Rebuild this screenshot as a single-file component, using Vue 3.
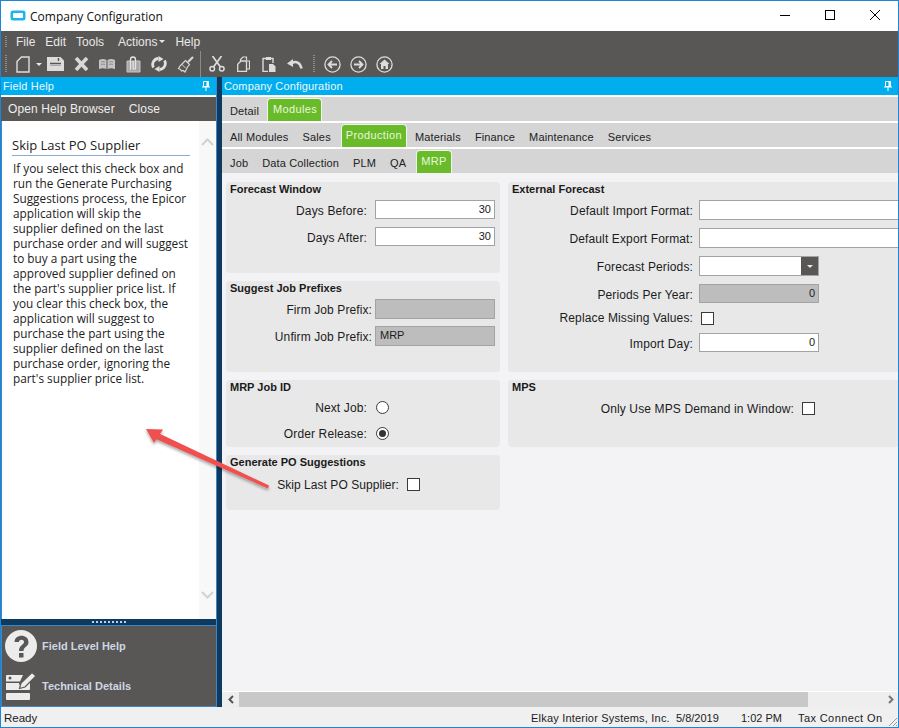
<script setup>
const helpLines = [
  'If you select this check box and',
  'run the Generate Purchasing',
  'Suggestions process, the Epicor',
  'application will skip the',
  'supplier defined on the last',
  'purchase order and will suggest',
  'to buy a part using the',
  'approved supplier defined on',
  "the part's supplier price list. If",
  'you clear this check box, the',
  'application will suggest to',
  'purchase the part using the',
  'supplier defined on the last',
  'purchase order, ignoring the',
  "part's supplier price list."
]
const moduleTabs = ['All Modules', 'Sales', 'Production', 'Materials', 'Finance', 'Maintenance', 'Services']
const subTabs = ['Job', 'Data Collection', 'PLM', 'QA', 'MRP']
</script>

<template>
  <div class="window">
    <!-- title bar -->
    <div class="titlebar">
      <svg class="app-icon" width="16" height="12" viewBox="0 0 16 12">
        <rect x="0.5" y="0.5" width="15" height="10" rx="2.5" fill="#1fb5ea" />
        <rect x="3" y="3" width="10" height="5" rx="1" fill="#fff" />
      </svg>
      <span class="title">Company Configuration</span>
      <div class="win-buttons">
        <svg width="12" height="12" viewBox="0 0 12 12"><path d="M1 6.5h10" stroke="#000" fill="none" /></svg>
        <svg width="12" height="12" viewBox="0 0 12 12"><rect x="1.5" y="1.5" width="9" height="9" stroke="#000" fill="none" /></svg>
        <svg width="12" height="12" viewBox="0 0 12 12"><path d="M1 1l10 10M11 1L1 11" stroke="#000" fill="none" /></svg>
      </div>
    </div>

    <!-- menu + toolbar -->
    <div class="menubar">
      <i class="grip"></i>
      <span>File</span><span>Edit</span><span class="tools">Tools</span>
      <span>Actions<b class="caret"></b></span>
      <span>Help</span>
    </div>
    <div class="toolbar">
      <i class="grip tall"></i>
      <svg class="ic new" width="14" height="17" viewBox="0 0 14 17"><path d="M5.500 1H13v15H1V5.500z" fill="none" stroke="#dedede" stroke-width="1.400" /></svg>
      <b class="caret tb"></b>
      <svg class="ic save" width="17" height="16" viewBox="0 0 17 16"><path d="M0 1h13.500L17 4.500V15H0z" fill="#dcdcdc" /><path d="M3 7.500h11M11.500 2v3" stroke="#595755" stroke-width="1.500" fill="none" /><path d="M3 9.500h11" stroke="#aaa" /></svg>
      <svg class="ic x" width="15" height="14" viewBox="0 0 15 14"><path d="M2 1l11 12M13 1L2 13" stroke="#d8d8d8" stroke-width="3.600" fill="none" /></svg>
      <svg class="ic book" width="16" height="12" viewBox="0 0 16 12"><path d="M0 2c3-1.500 5-1.500 7.500 0v9C5 10 3 10 0 11zM16 2c-3-1.500-5-1.500-7.500 0v9c2.500-1 4.500-1 7.500 0z" fill="#c4c4c4" /><path d="M2 4c1.500-.5 2.500-.5 4 0M2 6.500c1.500-.5 2.500-.5 4 0M10 4c1.500-.5 2.500-.5 4 0M10 6.500c1.500-.5 2.500-.5 4 0" stroke="#8e8e8e" fill="none" /></svg>
      <svg class="ic clip" width="15" height="17" viewBox="0 0 15 17"><path d="M1 5h13v11H1z" fill="#a8a8a8" stroke="#c8c8c8" /><path d="M4.500 14V3.500a2.500 2.500 0 0 1 5 0V12a1.200 1.200 0 0 1-2.400 0V5" fill="none" stroke="#e4e4e4" stroke-width="1.300" /></svg>
      <svg class="ic sync" width="16" height="16" viewBox="0 0 16 16"><path d="M2.500 11.500A6 6 0 0 1 7.500 2.500" fill="none" stroke="#e0e0e0" stroke-width="2.800" /><path d="M13.500 4.500A6 6 0 0 1 8.500 13.500" fill="none" stroke="#e0e0e0" stroke-width="2.800" /><path d="M7.500 0l5 3-5 3zM8.500 16l-5-3 5-3z" fill="#e0e0e0" /></svg>
      <svg class="ic broom" width="17" height="17" viewBox="0 0 17 17"><path d="M16 1l-5 5" stroke="#d8d8d8" stroke-width="2.200" /><path d="M8.500 4.500l4 4-2 2.500-2.500 5-2-1.500-1.500.5-1-1.500-2-1 1.500-2.500 3-3z" fill="none" stroke="#d8d8d8" stroke-width="1.200" /><path d="M4.500 8l4 4" stroke="#d8d8d8" /></svg>
      <i class="sep"></i>
      <svg class="ic cut" width="16" height="16" viewBox="0 0 16 16"><circle cx="3.200" cy="12.800" r="2.300" fill="none" stroke="#dcdcdc" stroke-width="1.500" /><circle cx="12.800" cy="12.800" r="2.300" fill="none" stroke="#dcdcdc" stroke-width="1.500" /><path d="M4.500 11L12.500 0M11.500 11L3.500 0" stroke="#dcdcdc" stroke-width="1.700" /></svg>
      <svg class="ic copy" width="13" height="16" viewBox="0 0 13 16"><path d="M3.500 5V3.500L6 1h3.500v3M9.500 5h3v8h-3" fill="none" stroke="#dcdcdc" stroke-width="1.200" /><path d="M4 5h5.500v10.500H.7V8.300z" fill="none" stroke="#dcdcdc" stroke-width="1.300" /></svg>
      <svg class="ic paste" width="14" height="16" viewBox="0 0 14 16"><path d="M4 2.500H1v13h5M9 2.500h2V7" fill="none" stroke="#dcdcdc" stroke-width="1.400" /><path d="M4 1h5v3H4z" fill="#dcdcdc" /><path d="M7 8h4l2.500 2.500V16H7z" fill="#dcdcdc" /></svg>
      <svg class="ic undo" width="16" height="11" viewBox="0 0 16 11"><path d="M5 4c4-2 8-1 9.500 5.500" fill="none" stroke="#dcdcdc" stroke-width="2.600" /><path d="M0 4.500L6 0v8z" fill="#dcdcdc" /></svg>
      <i class="grip tall g2"></i>
      <svg class="ic nav" width="17" height="17" viewBox="0 0 17 17"><circle cx="8.500" cy="8.500" r="7.600" fill="none" stroke="#dcdcdc" stroke-width="1.300" /><path d="M13 8.500H5M8 5L4.500 8.500 8 12" fill="none" stroke="#dcdcdc" stroke-width="1.800" /></svg>
      <svg class="ic nav" width="17" height="17" viewBox="0 0 17 17"><circle cx="8.500" cy="8.500" r="7.600" fill="none" stroke="#dcdcdc" stroke-width="1.300" /><path d="M4 8.500h8M9 5l3.500 3.500L9 12" fill="none" stroke="#dcdcdc" stroke-width="1.800" /></svg>
      <svg class="ic nav" width="17" height="17" viewBox="0 0 17 17"><circle cx="8.500" cy="8.500" r="7.600" fill="none" stroke="#dcdcdc" stroke-width="1.300" /><path d="M8.500 3.500L3.500 8H5v5h2.500v-3h2v3H12V8h1.500z" fill="#dcdcdc" /></svg>
    </div>

    <div class="body">
      <!-- field help panel -->
      <div class="help-panel">
        <div class="panel-head">
          <span>Field Help</span>
          <svg class="pin" width="8" height="10" viewBox="0 0 8 10"><path d="M1.500 0.500h5v5h-5zM0 6h8M4 6v4" fill="none" stroke="#fff" /><path d="M4.500 1h2v4h-2z" fill="#fff" /></svg>
        </div>
        <div class="help-actions"><span>Open Help Browser</span><span>Close</span></div>
        <div class="help-content">
          <div class="help-text">
            <h3>Skip Last PO Supplier</h3>
            <p><template v-for="line in helpLines" :key="line">{{ line }}<br /></template></p>
          </div>
          <div class="help-scroll">
            <svg width="13" height="8" viewBox="0 0 13 8"><path d="M1 7l5.500-5.500L12 7" fill="none" stroke="#d2d2d2" stroke-width="2" /></svg>
            <svg width="13" height="8" viewBox="0 0 13 8"><path d="M1 1l5.500 5.500L12 1" fill="none" stroke="#d2d2d2" stroke-width="2" /></svg>
          </div>
        </div>
        <div class="splitter"><i v-for="n in 9" :key="n"></i></div>
        <div class="help-links">
          <div class="help-link">
            <svg width="32" height="32" viewBox="0 0 32 32">
              <circle cx="16" cy="16" r="16" fill="#ececec" />
              <path d="M9.500 12c0-8.500 14-8.500 14 0 0 5-5 4.500-5 9h-4.500c0-6 5-6 5-9 0-3-5-3-5 0z" fill="#595755" />
              <rect x="14" y="23" width="4.500" height="4.500" fill="#595755" />
            </svg>
            <span>Field Level Help</span>
          </div>
          <div class="help-link">
            <svg width="32" height="29" viewBox="0 0 32 29">
              <path d="M2 4h16l-3 6.500H1V5a1 1 0 0 1 1-1z" fill="#ececec" />
              <path d="M1 12h12l-1 7h12a1 1 0 0 0 1-1v-6h-5l-2 2" fill="#ececec" />
              <path d="M1 12h13v7H1z" fill="#ececec" />
              <rect x="1" y="22" width="24" height="7" rx="1" fill="#ececec" />
              <circle cx="5" cy="7" r="1.500" fill="#595755" />
              <path d="M27 1.500l4 3.500-11 11-5.500 1.500 1.500-5.500z" fill="#ececec" stroke="#595755" stroke-width="1.200" />
            </svg>
            <span>Technical Details</span>
          </div>
        </div>
      </div>

      <!-- main panel -->
      <div class="main-panel">
        <div class="panel-head">
          <span>Company Configuration</span>
          <svg class="pin" width="8" height="10" viewBox="0 0 8 10"><path d="M1.500 0.500h5v5h-5zM0 6h8M4 6v4" fill="none" stroke="#fff" /><path d="M4.500 1h2v4h-2z" fill="#fff" /></svg>
        </div>
        <div class="tabs first">
          <span class="tab">Detail</span>
          <span class="tab active">Modules</span>
        </div>
        <div class="tabs">
          <span v-for="t in moduleTabs" :key="t" class="tab" :class="{ active: t === 'Production' }">{{ t }}</span>
        </div>
        <div class="tabs">
          <span v-for="t in subTabs" :key="t" class="tab" :class="{ active: t === 'MRP' }">{{ t }}</span>
        </div>

        <div class="content">
          <div class="col left-col">
            <section class="group g-forecast">
              <h4>Forecast Window</h4>
              <div class="row"><label>Days Before:</label><div class="input num">30</div></div>
              <div class="row"><label>Days After:</label><div class="input num">30</div></div>
            </section>
            <section class="group g-prefix">
              <h4>Suggest Job Prefixes</h4>
              <div class="row prefix"><label>Firm Job Prefix:</label><div class="input off tall"></div></div>
              <div class="row prefix"><label>Unfirm Job Prefix:</label><div class="input off tall">MRP</div></div>
            </section>
            <section class="group g-jobid">
              <h4>MRP Job ID</h4>
              <div class="row tight"><label>Next Job:</label><i class="radio"></i></div>
              <div class="row tight"><label>Order Release:</label><i class="radio on"></i></div>
            </section>
            <section class="group g-po">
              <h4>Generate PO Suggestions</h4>
              <div class="row po"><label>Skip Last PO Supplier:</label><i class="check"></i></div>
            </section>
          </div>

          <div class="col right-col">
            <section class="group g-external">
              <h4>External Forecast</h4>
              <div class="row"><label>Default Import Format:</label><div class="input wide"></div></div>
              <div class="row"><label>Default Export Format:</label><div class="input wide"></div></div>
              <div class="row">
                <label>Forecast Periods:</label>
                <div class="input combo"><b class="combo-btn"><i class="caret"></i></b></div>
              </div>
              <div class="row"><label>Periods Per Year:</label><div class="input off num">0</div></div>
              <div class="row check-row"><label>Replace Missing Values:</label><i class="check"></i></div>
              <div class="row"><label>Import Day:</label><div class="input num">0</div></div>
            </section>
            <section class="group g-mps">
              <h4>MPS</h4>
              <div class="row mps"><label>Only Use MPS Demand in Window:</label><i class="check"></i></div>
            </section>
          </div>
        </div>

        <div class="hscroll">
          <svg width="6" height="9" viewBox="0 0 6 9"><path d="M5 1L1.500 4.500 5 8" fill="none" stroke="#555" stroke-width="2" /></svg>
          <div class="thumb"></div>
          <svg class="right-arrow" width="6" height="9" viewBox="0 0 6 9"><path d="M1 1l3.500 3.500L1 8" fill="none" stroke="#777" stroke-width="2" /></svg>
        </div>
      </div>
    </div>

    <!-- status bar -->
    <div class="statusbar">
      <span class="ready">Ready</span>
      <span class="s-company">Elkay Interior Systems, Inc.</span>
      <span class="s-date">5/8/2019</span>
      <span class="s-time">1:02 PM</span>
      <span class="s-tax">Tax Connect On</span>
      <svg class="resize" width="11" height="11" viewBox="0 0 11 11"><path d="M10 2L2 10M10 6L6 10M10 9L9 10" stroke="#999" fill="none" /></svg>
    </div>

    <!-- annotation arrow lying over the screenshot -->
    <svg class="annotation" width="899" height="728" viewBox="0 0 899 728">
      <defs>
        <filter id="arrow-shadow" x="-10%" y="-10%" width="120%" height="130%">
          <feDropShadow dx="0" dy="2" stdDeviation="1.500" flood-color="#000" flood-opacity="0.35" />
        </filter>
      </defs>
      <g filter="url(#arrow-shadow)" fill="#f0504f">
        <path d="M269 485.500L156 432L153.500 438L268 488.500z" />
        <path d="M146 429L163 429.500L154 443z" />
      </g>
    </svg>
  </div>
</template>

<style>
html, body {
  margin: 0;
  background: #fff;
}
</style>

<style scoped>
.window {
  position: relative;
  width: 899px;
  height: 728px;
  box-sizing: border-box;
  border: 1px solid #1a86d8;
  display: flex;
  flex-direction: column;
  overflow: hidden;
  font-family: 'Liberation Sans', Arial, sans-serif;
  font-size: 12px;
  color: #1c1c1c;
  background: #fff;
}

.titlebar {
  height: 30px;
  flex: none;
  display: flex;
  align-items: center;
  padding-left: 9px;
  background: #fff;
}
.app-icon { margin-right: 4px; }
.title {
  font-family: 'Open Sans', sans-serif;
  font-size: 12px;
  color: #111;
}
.win-buttons {
  margin-left: auto;
  margin-right: 17px;
  margin-bottom: 2px;
  display: flex;
  gap: 33px;
}

.menubar {
  height: 22px;
  flex: none;
  display: flex;
  align-items: center;
  background: #595755;
  color: #e8e8e8;
  font-size: 12px;
  padding-left: 4px;
  padding-bottom: 1px;
  box-sizing: border-box;
}
.menubar span { margin-right: 10px; display: inline-flex; align-items: center; }
.menubar .grip { margin-right: 9px; }
.menubar .tools { margin-right: 14px; }

.grip {
  display: inline-block;
  width: 2px;
  height: 12px;
  background: repeating-linear-gradient(#8d8b89 0 1px, transparent 1px 2px);
}
.grip.tall { height: 18px; margin-right: 9px; }
.caret {
  display: inline-block;
  width: 0;
  height: 0;
  border-left: 3px solid transparent;
  border-right: 3px solid transparent;
  border-top: 3px solid #e8e8e8;
  margin-left: 2px;
}

.toolbar {
  height: 24px;
  flex: none;
  display: flex;
  align-items: center;
  background: #595755;
  padding-left: 4px;
  padding-bottom: 2px;
  box-sizing: border-box;
}
.ic { flex: none; }
.caret.tb { margin-left: 6px; margin-right: 5px; }
.save { margin-right: 10px; }
.x { margin-right: 10px; }
.book { margin-right: 11px; }
.clip { margin-right: 10px; }
.sync { margin-right: 10px; }
.sep {
  width: 1px;
  height: 26px;
  background: #8d8b89;
  margin: 0 8px 0 6px;
}
.cut { margin-right: 12px; }
.copy { margin-right: 12px; }
.paste { margin-right: 11px; }
.undo { margin-right: 10px; }
.grip.g2 { margin-right: 9px; }
.nav { margin-right: 9px; }

.body {
  flex: 1;
  min-height: 0;
  display: flex;
  background: #0e3a5f;
}

.panel-head {
  height: 18px;
  flex: none;
  background: #00aeef;
  color: #ecf8fe;
  display: flex;
  align-items: center;
  justify-content: space-between;
  padding: 0 3px 0 2px;
  font-size: 11px;
  letter-spacing: 0.15px;
}
.pin { margin-right: 3px; }

.help-panel {
  width: 216px;
  flex: none;
  display: flex;
  flex-direction: column;
  border-right: 1px solid #3f86c9;
  box-sizing: border-box;
  margin-right: 5px;
  background: #fff;
}
.help-actions {
  height: 24px;
  flex: none;
  margin-top: 2px;
  background: #595755;
  color: #eee;
  display: flex;
  align-items: center;
  gap: 14px;
  padding-left: 7px;
  font-size: 12px;
  letter-spacing: 0.12px;
}
.help-content {
  flex: 1;
  min-height: 0;
  display: flex;
  background: #fff;
  border-left: 1px solid #3f86c9;
}
.help-text {
  width: 197px;
  box-sizing: border-box;
  padding: 16px 0 0 11px;
  font-family: 'Open Sans', sans-serif;
  color: #222;
}
.help-text h3 {
  margin: 0 9px 0 -1px;
  font-size: 13px;
  font-weight: 400;
  line-height: 17px;
  padding-bottom: 1px;
  border-bottom: 1px solid #8ea9d6;
}
.help-text p {
  margin: 5px 0 0;
  font-size: 11.8px;
  line-height: 15px;
  white-space: nowrap;
}
.help-scroll {
  flex: 1;
  background: #f8f8f8;
  display: flex;
  flex-direction: column;
  justify-content: space-between;
  align-items: center;
  padding: 17px 0 20px;
  box-sizing: border-box;
}
.splitter {
  height: 6px;
  flex: none;
  background: #0e3a5f;
  border-bottom: 1px solid #3f86c9;
  display: flex;
  justify-content: center;
  align-items: center;
  gap: 2px;
}
.splitter i {
  width: 2px;
  height: 2px;
  background: #b9d2ea;
}
.help-links {
  height: 81px;
  flex: none;
  background: #595755;
  border-left: 1px solid #3f86c9;
  border-bottom: 1px solid #3f86c9;
  box-sizing: border-box;
  padding: 4px 0 0 3px;
  display: flex;
  flex-direction: column;
  gap: 9px;
}
.help-link {
  display: flex;
  align-items: center;
  gap: 5px;
  color: #cdd6e4;
  font-weight: 700;
  font-size: 11px;
}

.main-panel {
  flex: 1;
  min-width: 0;
  display: flex;
  flex-direction: column;
  background: #fff;
}
.tabs {
  height: 24px;
  flex: none;
  margin-top: 2px;
  background: #d5d5d5;
  display: flex;
  align-items: flex-end;
  padding-left: 3px;
  color: #222;
  font-size: 11px;
  box-sizing: border-box;
}
.tab {
  height: 23px;
  box-sizing: border-box;
  padding: 7px 5px 0;
  margin-right: 4px;
  white-space: nowrap;
  letter-spacing: 0.15px;
}
.tab.active {
  background: #6abb2a;
  color: #e8f8dc;
  border: 1px solid #f0f5ea;
  border-bottom: none;
  border-radius: 4px 4px 0 0;
  padding: 4px 4px 0 4px;
  margin: 0 3px 0 1px;
  letter-spacing: 0.35px;
}
.tabs.first .tab.active {
  margin-left: -1px;
  padding-left: 5px;
}

.content {
  flex: 1;
  min-height: 0;
  background: #f3f3f5;
  display: flex;
  padding: 9px 0 0 4px;
  gap: 8px;
  overflow: hidden;
}
.col {
  display: flex;
  flex-direction: column;
  gap: 8px;
  flex: none;
}
.left-col { width: 274px; }
.right-col { width: 400px; }
.group {
  background: #e8e8e8;
  border-radius: 4px;
  box-sizing: border-box;
  padding: 1px 4px 0;
  flex: none;
}
.group h4 {
  margin: 0 0 4px;
  font-size: 11px;
  font-weight: 700;
  line-height: 13px;
  color: #1a1a1a;
}
.g-forecast { height: 91px; }
.g-prefix { height: 91px; }
.g-jobid { height: 67px; }
.g-po { height: 55px; }
.g-external { height: 190px; }
.g-mps { height: 67px; }

.row {
  display: flex;
  align-items: center;
  margin-bottom: 8px;
}
.row label {
  width: 137px;
  flex: none;
  text-align: right;
  white-space: nowrap;
  letter-spacing: 0.13px;
  padding-top: 2px;
  margin-right: 8px;
}
.row.prefix label { width: 142px; margin-right: 3px; letter-spacing: 0.1px; }
.row.prefix { margin-bottom: 7px; }
.row.tight { height: 18px; margin-bottom: 8px; }
.row.tight:first-of-type { margin-top: 1px; }
.right-col .row label { width: 181px; margin-right: 6px; }
.input {
  width: 120px;
  height: 19px;
  flex: none;
  box-sizing: border-box;
  border: 1px solid #a3a3a3;
  background: #fff;
  padding: 0 3px 1px 4px;
  line-height: 16px;
  font-size: 11px;
}
.input.num { text-align: right; }
.input.off { background: #bdbdbd; }
.input.tall { height: 20px; }
.input.wide { width: 260px; height: 20px; }
.input.combo { position: relative; height: 20px; }
.combo-btn {
  position: absolute;
  top: 0;
  right: 0;
  width: 17px;
  height: 18px;
  background: #595755;
  display: flex;
  align-items: center;
  justify-content: center;
}
.combo-btn .caret { margin: 0; }

.check {
  display: block;
  flex: none;
  width: 13px;
  height: 13px;
  box-sizing: border-box;
  border: 1px solid #3a3a3a;
  background: #fff;
}
.radio {
  display: block;
  flex: none;
  width: 13px;
  height: 13px;
  box-sizing: border-box;
  border: 1px solid #3a3a3a;
  border-radius: 50%;
  background: #fff;
  margin-left: 1px;
  position: relative;
}
.radio.on::after {
  content: '';
  position: absolute;
  inset: 2px;
  border-radius: 50%;
  background: #333;
}
.right-col .check-row { margin-top: 2px; margin-bottom: 8px; }
.right-col .check-row label { padding-top: 0; }
.right-col .check-row .check { margin-left: 2px; }
.row.po { margin-top: 7px; }
.row.po label { width: 169px; letter-spacing: 0.05px; }
.right-col .row.mps { margin-top: 6px; }
.right-col .row.mps label { width: 282px; margin-right: 8px; }

.hscroll {
  height: 16px;
  flex: none;
  background: #eee;
  border-top: 1px solid #fff;
  box-sizing: border-box;
  display: flex;
  align-items: center;
  padding-left: 6px;
  position: relative;
}
.thumb {
  width: 569px;
  height: 15px;
  background: #c8c8c8;
  margin-left: 5px;
}
.right-arrow { margin-left: auto; margin-right: 4px; }

.statusbar {
  height: 20px;
  flex: none;
  background: #f0f0f0;
  display: flex;
  align-items: center;
  font-size: 11px;
  padding: 1px 0 0 3px;
  box-sizing: border-box;
  position: relative;
}
.ready { width: 527px; flex: none; font-size: 11.5px; }
.s-company { width: 145px; flex: none; white-space: nowrap; letter-spacing: 0.2px; }
.s-date { width: 65px; flex: none; }
.s-time { width: 57px; flex: none; }
.s-tax { white-space: nowrap; letter-spacing: 0.4px; }
.resize { position: absolute; right: 0; bottom: 0; }

.annotation {
  position: absolute;
  left: -1px;
  top: -1px;
  pointer-events: none;
}
</style>
